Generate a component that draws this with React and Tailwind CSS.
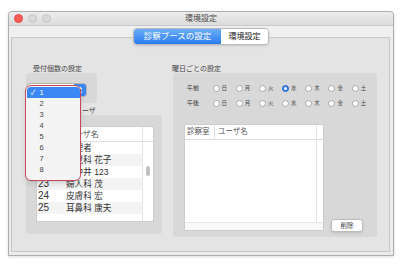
import { useState } from "react";

const days = ["日", "月", "火", "水", "木", "金", "土"];

// first rows sit under the open popup menu, their numbers are not visible
const users = [
  ["", "管理者"],
  ["", "小児科 花子"],
  ["", "田中井 123"],
  ["23", "婦人科 茂"],
  ["24", "皮膚科 宏"],
  ["25", "耳鼻科 康夫"],
];

function Radio({ checked, label }) {
  return (
    <div className="w-[23.2px] flex items-center gap-[2px] shrink-0">
      {checked ? (
        <span className="w-[7px] h-[7px] rounded-full bg-[#2f7cf3] border border-[#2467d4] flex items-center justify-center">
          <span className="w-[3px] h-[3px] rounded-full bg-white" />
        </span>
      ) : (
        <span className="w-[7px] h-[7px] rounded-full bg-white border border-[#a9a9a9]" />
      )}
      <span className="text-[5.5px] leading-[8px] text-[#444]">{label}</span>
    </div>
  );
}

function RadioRow({ label, selected }) {
  return (
    <div className="flex items-center h-[8px] pl-[3px]">
      <span className="w-[25.5px] text-[6px] leading-[8px] text-[#333] shrink-0">{label}</span>
      {days.map((d, i) => (
        <Radio key={d} label={d} checked={i === selected} />
      ))}
    </div>
  );
}

function CountMenu({ value }) {
  const items = [1, 2, 3, 4, 5, 6, 7, 8];
  return (
    <div className="absolute left-[-1px] top-[12px] w-[56px] h-[96px] bg-[#f4f4f4] border-[1.5px] border-[#c9475c] rounded-[6px] shadow-md pt-[0.5px] px-[0.5px]">
      {items.map((n) => (
        <div
          key={n}
          className={
            n === value
              ? "h-[11px] flex items-center bg-[#3b87f4] text-white rounded-t-[4px]"
              : "h-[11px] flex items-center text-[#444]"
          }
        >
          <span className="w-[13px] pl-[4px] text-[7px] leading-[11px]">{n === value ? "✓" : ""}</span>
          <span className="text-[7.5px] leading-[11px]">{n}</span>
        </div>
      ))}
    </div>
  );
}

export default function App() {
  const [count] = useState(1);

  return (
    <div className="w-[402px] h-[266px] bg-white pt-[11px] pl-[8px] font-['Liberation_Sans','Noto_Sans_CJK_JP',sans-serif]">
      <div className="relative w-[386px] h-[245px] border border-[#adadad] rounded-t-[4px] bg-[#ececec] flex flex-col shadow-[0_1px_3px_rgba(0,0,0,0.15)]">
        {/* title bar */}
        <div className="h-[14px] flex items-center border-b border-[#c9c9c9] bg-gradient-to-b from-[#ececec] to-[#dcdcdc] rounded-t-[4px]">
          <div className="w-[43px] flex items-center gap-[5px] pl-[4.5px]">
            <span className="w-[9px] h-[9px] rounded-full bg-[#fc5e57] border border-[#e2463f]" />
            <span className="w-[9px] h-[9px] rounded-full bg-[#d9d9d9] border border-[#c6c6c6]" />
            <span className="w-[9px] h-[9px] rounded-full bg-[#d9d9d9] border border-[#c6c6c6]" />
          </div>
          <div className="flex-1 text-center text-[8px] leading-[13px] text-[#4a4a4a]">環境設定</div>
          <div className="w-[43px]" />
        </div>

        {/* toolbar band */}
        <div className="h-[11px] bg-[#efefef]" />

        {/* segmented tabs */}
        <div className="absolute left-[124px] top-[16px] flex h-[17px] rounded-[4px] border border-[#b9b9b9] shadow-sm overflow-hidden">
          <div className="w-[87px] flex items-center justify-center bg-gradient-to-b from-[#6badf8] to-[#2a7bef] text-white text-[8.5px]">
            診察ブースの設定
          </div>
          <div className="w-[47px] flex items-center justify-center bg-white text-[#222] text-[8px]">環境設定</div>
        </div>

        {/* tab box */}
        <div className="flex-1 ml-[2px] mr-[3px] mb-[3px] border border-[#c8c8c8] bg-[#e4e4e4] flex pl-[14px] pt-[26px]">
          {/* left column */}
          <div className="w-[136px] flex flex-col">
            <div className="h-[9px] pl-[7px] text-[7px] leading-[9px] text-[#444]">受付個数の設定</div>
            <div className="relative w-[71px] h-[30px] bg-[#d8d8d8] rounded-[3px] pt-[10px] pl-[1px]">
              <div className="w-[60px] h-[14px] flex rounded-[3px] border border-[#b4b4b4] bg-white overflow-hidden">
                <div className="flex-1" />
                <div className="w-[12px] bg-[#3b86f3] flex flex-col items-center justify-center">
                  <svg width="6" height="9" viewBox="0 0 6 9" fill="none" stroke="white" strokeWidth="1.1">
                    <path d="M1 3.3 L3 1.3 L5 3.3" />
                    <path d="M1 5.7 L3 7.7 L5 5.7" />
                  </svg>
                </div>
              </div>
              <CountMenu value={count} />
            </div>

            <div className="mt-[4px] h-[8px] pl-[49px] text-[7px] leading-[8px] text-[#444]">ユーザ</div>
            <div className="h-[119px] bg-[#d8d8d8] rounded-[3px] pt-[11px] pl-[10px]">
              <div className="w-[118px] h-[96px] border border-[#cdcdcd] bg-white flex">
                <div className="flex-1 flex flex-col">
                  <div className="h-[15px] flex border-b border-[#dddddd] text-[8px] leading-[15px] text-[#555]">
                    <div className="w-[26px] border-r border-[#e2e2e2]" />
                    <div className="flex-1 pl-[4px]">ユーザ名</div>
                  </div>
                  {users.map(([num, name], i) => (
                    <div
                      key={name}
                      className={
                        i % 2 === 1
                          ? "h-[12px] flex bg-[#f3f4f4] text-[#333] leading-[12px]"
                          : "h-[12px] flex bg-white text-[#333] leading-[12px]"
                      }
                    >
                      <div className="w-[27px] pl-[1px] text-[10px]">{num}</div>
                      <div className="flex-1 pl-[2px] text-[8.6px] whitespace-nowrap">{name}</div>
                    </div>
                  ))}
                </div>
                <div className="w-[11px] border-l border-[#e2e2e2] flex flex-col">
                  <div className="h-[15px] border-b border-[#dddddd]" />
                  <div className="mt-[24px] mx-auto w-[4px] h-[10px] rounded-full bg-[#c2c2c2]" />
                </div>
              </div>
            </div>
          </div>

          {/* right column */}
          <div className="ml-[10px] flex flex-col">
            <div className="h-[9px] text-[7px] leading-[9px] text-[#444]">曜日ごとの設定</div>
            <div className="ml-[1px] w-[204px] h-[164px] bg-[#d8d8d8] rounded-[3px] pt-[11px] pl-[11px] flex flex-col">
              <RadioRow label="午前" selected={3} />
              <div className="mt-[7px]">
                <RadioRow label="午後" selected={-1} />
              </div>
              <div className="mt-[17px] flex items-end gap-[7px]">
                <div className="w-[140px] h-[107px] border border-[#cdcdcd] bg-white flex flex-col">
                  <div className="flex-1 flex">
                    <div className="flex-1 flex flex-col">
                      <div className="h-[15px] flex border-b border-[#dddddd] text-[7.5px] leading-[14px] text-[#555]">
                        <div className="w-[30px] border-r border-[#e2e2e2] pl-[2px]">診察室</div>
                        <div className="flex-1 pl-[3px]">ユーザ名</div>
                      </div>
                    </div>
                    <div className="w-[7px] border-l border-[#e6e6e6] flex flex-col">
                      <div className="h-[15px] border-b border-[#dddddd]" />
                    </div>
                  </div>
                  <div className="h-[8px] border-t border-[#e6e6e6] bg-[#f8f8f8]" />
                </div>
                <button className="mb-[-1px] w-[32px] h-[13px] rounded-[3px] border border-[#bcbcbc] bg-white shadow-sm text-[6.5px] text-[#444] flex items-center justify-center">
                  削除
                </button>
              </div>
            </div>
          </div>
        </div>
      </div>
    </div>
  );
}
